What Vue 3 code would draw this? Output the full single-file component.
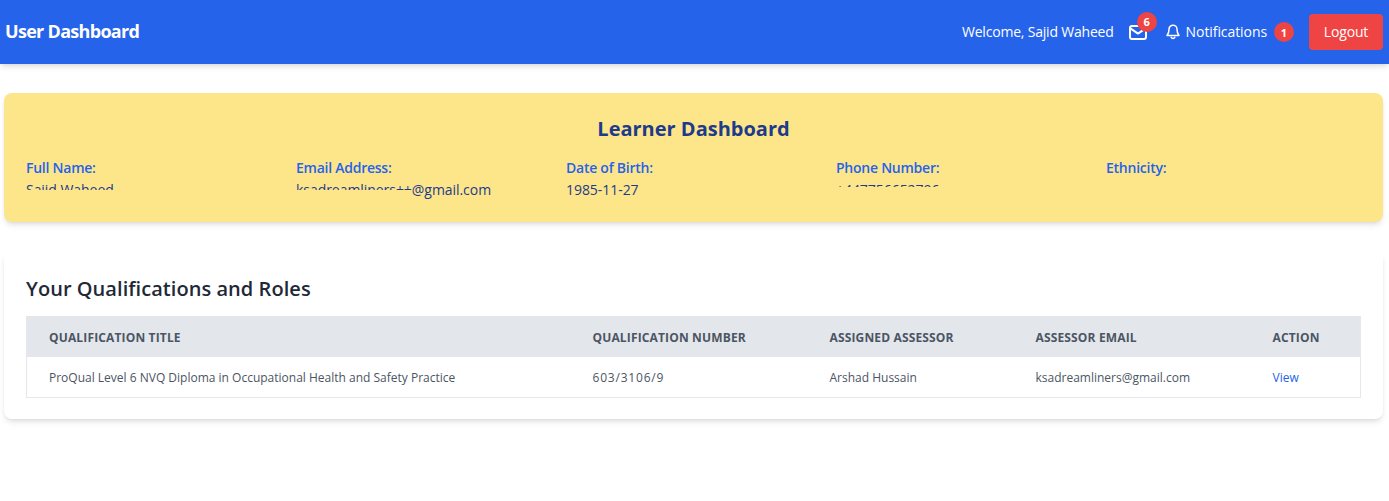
<script setup>
const fields = [
  { label: 'Full Name:', value: 'Sajid Waheed', clip: 'clip' },
  { label: 'Email Address:', value: 'ksadreamliners++', tail: '@gmail.com', clip: 'clip' },
  { label: 'Date of Birth:', value: '1985-11-27' },
  { label: 'Phone Number:', value: '+447756652796', clip: 'clip-short' },
  { label: 'Ethnicity:', value: '' },
]
const heads = ['Qualification Title', 'Qualification Number', 'Assigned Assessor', 'Assessor Email', 'Action']
</script>

<template>
  <div class="page">
    <header class="nav">
      <div class="brand">User Dashboard</div>
      <div class="nav-right">
        <span class="welcome">Welcome, Sajid Waheed</span>
        <span class="mail">
          <svg width="18" height="15" viewBox="0 0 18 15" fill="none" stroke="#fff" stroke-width="2" stroke-linecap="round" stroke-linejoin="round">
            <rect x="1" y="1" width="16" height="13" rx="2" />
            <path d="M1 3.2 9 8.6l8-5.4" />
          </svg>
          <span class="badge mail-badge">6</span>
        </span>
        <span class="notes">
          <svg width="14" height="16" viewBox="0 0 14 16" fill="none" stroke="#fff" stroke-width="1.5" stroke-linecap="round" stroke-linejoin="round">
            <path d="M7 1.2a4 4 0 0 0-4 4c0 4-1.5 5.4-2 6.3h12c-.5-.9-2-2.3-2-6.3a4 4 0 0 0-4-4Z" />
            <path d="M5.2 13.2a1.9 1.9 0 0 0 3.6 0" />
          </svg>
          <span class="note-text">Notifications</span>
          <span class="badge note-badge">1</span>
        </span>
        <button class="logout">Logout</button>
      </div>
    </header>

    <main class="main">
      <section class="learner">
        <h1>Learner Dashboard</h1>
        <div class="fields">
          <div v-for="f in fields" :key="f.label" class="field">
            <div class="label">{{ f.label }}</div>
            <div class="value"><span :class="f.clip">{{ f.value }}</span>{{ f.tail }}</div>
          </div>
        </div>
      </section>

      <section class="quals">
        <h2>Your Qualifications and Roles</h2>
        <table>
          <colgroup>
            <col class="c1" /><col class="c2" /><col class="c3" /><col class="c4" /><col class="c5" />
          </colgroup>
          <thead>
            <tr><th v-for="h in heads" :key="h">{{ h }}</th></tr>
          </thead>
          <tbody>
            <tr>
              <td>ProQual Level 6 NVQ Diploma in Occupational Health and Safety Practice</td>
              <td class="num">603/3106/9</td>
              <td>Arshad Hussain</td>
              <td>ksadreamliners@gmail.com</td>
              <td><a class="view">View</a></td>
            </tr>
          </tbody>
        </table>
      </section>
    </main>
  </div>
</template>

<style>
html, body { margin: 0; background: #fff; }
</style>

<style scoped>
.page {
  font-family: "Open Sans", "Noto Sans", sans-serif;
  color: #1f2937;
  min-height: 501px;
  overflow: hidden;
}
.nav {
  height: 64px;
  box-sizing: border-box;
  background: #2563eb;
  color: #fff;
  display: flex;
  align-items: center;
  justify-content: space-between;
  padding: 0 6px 0 5px;
  box-shadow: 0 4px 6px -1px rgba(0,0,0,.1), 0 2px 4px -2px rgba(0,0,0,.1);
}
.brand { font-size: 18px; font-weight: 700; letter-spacing: -0.7px; padding-bottom: 2px; }
.nav-right { display: flex; align-items: center; font-size: 14px; }
.welcome { margin-right: 15px; letter-spacing: -0.2px; padding-bottom: 2px; }
.mail { position: relative; display: flex; margin-right: 19px; }
.badge {
  background: #ef4444;
  color: #fff;
  border-radius: 50%;
  width: 20px;
  height: 20px;
  font-size: 11px;
  font-weight: 700;
  display: flex;
  align-items: center;
  justify-content: center;
}
.mail-badge { position: absolute; top: -13px; left: 8px; }
.notes { display: flex; align-items: center; gap: 6px; margin-right: 15px; }
.note-text { letter-spacing: -0.08px; padding-bottom: 2px; }
.note-badge { margin-left: 1px; }
.logout {
  width: 74px;
  height: 36px;
  border: 0;
  border-radius: 4px;
  background: #ef4444;
  color: #fff;
  font: inherit;
  letter-spacing: -0.15px;
  padding: 0 0 2px;
}
.main { padding: 29px 6px 0 4px; }
.learner {
  background: #fde68a;
  border-radius: 8px;
  height: 129px;
  box-sizing: border-box;
  padding: 22px 23px 0 22px;
  box-shadow: 0 4px 6px -1px rgba(0,0,0,.1), 0 2px 4px -2px rgba(0,0,0,.1);
}
h1 {
  margin: 0 0 15px;
  text-align: center;
  font-size: 20px;
  line-height: 28px;
  font-weight: 700;
  color: #1e3a8a;
  padding-left: 1px;
}
.fields { display: grid; grid-template-columns: repeat(5, 1fr); column-gap: 16px; }
.label { font-size: 14px; line-height: 20px; font-weight: 600; color: #2563eb; letter-spacing: -0.25px; }
.value { font-size: 14px; line-height: 24px; height: 24px; color: #1e3a8a; letter-spacing: -0.05px; }
.clip, .clip-short { display: inline-block; overflow: hidden; vertical-align: top; }
.clip { height: 12px; }
.clip-short { height: 9px; }
.quals {
  margin-top: 29px;
  background: #fff;
  border-radius: 8px;
  height: 168px;
  box-sizing: border-box;
  padding: 24px 22px 0;
  box-shadow: 0 4px 6px -1px rgba(0,0,0,.1), 0 2px 4px -2px rgba(0,0,0,.1);
}
h2 {
  margin: 0 0 13px;
  font-size: 20px;
  line-height: 28px;
  font-weight: 600;
  color: #1f2937;
  letter-spacing: 0.05px;
}
table { width: 100%; border-collapse: collapse; table-layout: fixed; border: 1px solid #e5e7eb; }
.c1 { width: 544px; } .c2 { width: 237px; } .c3 { width: 206px; } .c4 { width: 237px; }
th {
  background: #e3e6eb;
  color: #4b5563;
  text-align: left;
  text-transform: uppercase;
  font-size: 12px;
  font-weight: 700;
  height: 40px;
  padding: 0 22px;
  letter-spacing: 0.15px;
}
td {
  height: 40px;
  padding: 0 22px;
  font-size: 12px;
  color: #4b5563;
  white-space: nowrap;
}
.num { letter-spacing: 0.8px; }
.view { color: #2563eb; }
</style>
